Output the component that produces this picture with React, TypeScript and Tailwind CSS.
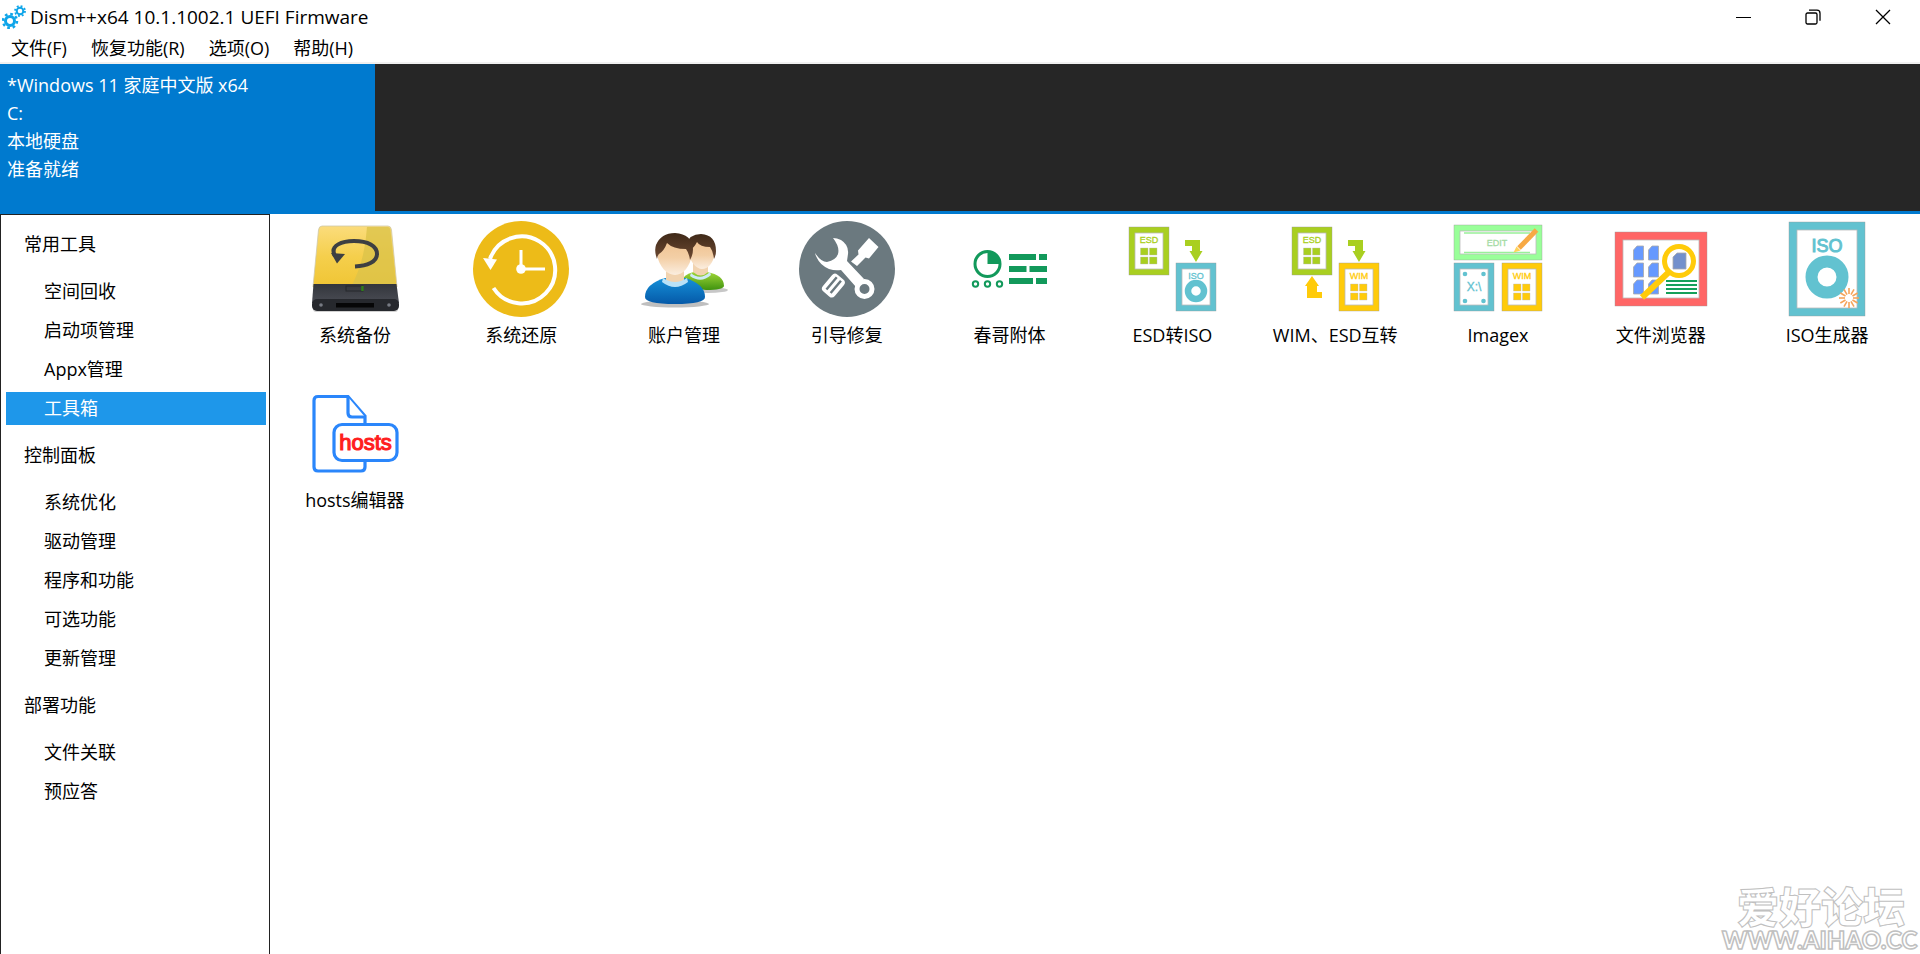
import type { ReactNode } from 'react'
import { clsx } from 'clsx'

const GREEN = '#a9cf20'
const CYAN = '#62c2d0'
const YELLOW = '#ffcb0a'

const menus = ['文件(F)', '恢复功能(R)', '选项(O)', '帮助(H)']

const groups = [
    { title: '常用工具', items: ['空间回收', '启动项管理', 'Appx管理', '工具箱'] },
    { title: '控制面板', items: ['系统优化', '驱动管理', '程序和功能', '可选功能', '更新管理'] },
    { title: '部署功能', items: ['文件关联', '预应答'] },
]

function Icon({ children }: { children: ReactNode }) {
    return (
        <svg viewBox="0 0 96 96" className="size-24 font-['Liberation_Sans',sans-serif]" aria-hidden="true">
            {children}
        </svg>
    )
}

function Frame({ x, y, w = 40, h = 48, color, border = 6 }: { x: number; y: number; w?: number; h?: number; color: string; border?: number }) {
    const half = border / 2
    return (
        <>
            <rect x={x + half} y={y + half} width={w - border} height={h - border} fill="#fff" stroke={color} strokeWidth={border} />
            <rect x={x + border} y={y + border} width={w - border * 2} height={h - border * 2} fill="none" stroke="#bbb" strokeWidth="0.8" />
            <rect x={x} y={y} width={w} height={h} fill="none" stroke="#999" strokeWidth="0.4" />
        </>
    )
}

function Caption({ x, y, size = 9, weight = 0.3, color, children }: { x: number; y: number; size?: number; weight?: number; color: string; children: string }) {
    return (
        <text x={x} y={y} fontSize={size} textAnchor="middle" fill={color} stroke={color} strokeWidth={weight}>
            {children}
        </text>
    )
}

function Panes({ x, y, color }: { x: number; y: number; color: string }) {
    return <path d={`M${x} ${y}h7.5v7h-7.5zM${x + 9} ${y}h7.5v7h-7.5zM${x} ${y + 9}h7.5v7h-7.5zM${x + 9} ${y + 9}h7.5v7h-7.5z`} fill={color} stroke="#bbb" strokeWidth="0.4" />
}

function ImageFile({ x, y, color, label }: { x: number; y: number; color: string; label: string }) {
    return (
        <>
            <Frame x={x} y={y} color={color} />
            <Caption x={x + 20} y={y + 16} color={color}>{label}</Caption>
            <Panes x={x + 11.5} y={y + 21} color={color} />
        </>
    )
}

const ArrowDown = () => <path d="M61 19h15v11h2.5L72 41l-6.5-11H68v-5h-7z" fill={GREEN} />

function BackupIcon() {
    return (
        <Icon>
            <defs>
                <linearGradient id="plate" x1="0" y1="0" x2="0" y2="1">
                    <stop offset="0" stopColor="#fbdc7c" />
                    <stop offset="0.5" stopColor="#f5cf4c" />
                    <stop offset="1" stopColor="#f0c534" />
                </linearGradient>
                <linearGradient id="base" x1="0" y1="0" x2="0" y2="1">
                    <stop offset="0" stopColor="#33363c" />
                    <stop offset="1" stopColor="#4a4c54" />
                </linearGradient>
            </defs>
            <rect x="6" y="84" width="85" height="7" rx="3" fill="#000" opacity="0.18" />
            <path d="M15 5h66q3 0 3.5 4L90 66H6L11.5 9Q12 5 15 5z" fill="url(#plate)" stroke="#cfc9a8" strokeWidth="0.8" />
            <path d="M60 6h21q2 0 2.5 3L89 66H44q14-26 16-60z" fill="#dcc34a" opacity="0.8" />
            <path d="M6.5 63h83L92 82H5z" fill="url(#base)" />
            <rect x="5" y="78" width="87" height="12" rx="5" fill="#26282d" />
            <rect x="29" y="82" width="38" height="4.5" fill="#060607" />
            <circle cx="14" cy="84" r="1.8" fill="#777b84" />
            <circle cx="82" cy="84" r="1.8" fill="#777b84" />
            <rect x="39" y="65" width="17" height="5" fill="none" stroke="#26282d" />
            <path d="M55.5 65v5" stroke="#2f7d1b" strokeWidth="2.5" />
            <path d="M28 35C22 24 36 20 47 20c14 0 23 5 23 13s-10 12-22 12.5" fill="none" stroke="#3d3f42" strokeWidth="4" />
            <path d="M24 32l14 1-8 9.500z" fill="#3d3f42" />
        </Icon>
    )
}

function RestoreIcon() {
    return (
        <Icon>
            <circle cx="48" cy="48" r="48" fill="#edbb18" />
            <path d="M20.5 67A33.5 33.5 0 1 0 17 38" fill="none" stroke="#fff" strokeWidth="4" />
            <path d="M10 37l14 1.5L17.5 49z" fill="#fff" />
            <path d="M48 29v19h24" fill="none" stroke="#fff" strokeWidth="3" />
            <circle cx="48" cy="48" r="4.8" fill="#fff" />
        </Icon>
    )
}

function AccountIcon() {
    return (
        <Icon>
            <defs>
                <linearGradient id="face" x1="0" y1="0" x2="0" y2="1">
                    <stop offset="0" stopColor="#eec08d" />
                    <stop offset="0.55" stopColor="#f3cfa6" />
                    <stop offset="1" stopColor="#fbeee0" />
                </linearGradient>
                <linearGradient id="hair" x1="0" y1="0" x2="0" y2="1">
                    <stop offset="0" stopColor="#3f2918" />
                    <stop offset="1" stopColor="#6e4a33" />
                </linearGradient>
                <linearGradient id="blue" x1="0" y1="0" x2="0" y2="1">
                    <stop offset="0" stopColor="#1590d8" />
                    <stop offset="1" stopColor="#0559a8" />
                </linearGradient>
                <linearGradient id="lime" x1="0" y1="0" x2="0" y2="1">
                    <stop offset="0" stopColor="#a0d638" />
                    <stop offset="1" stopColor="#3f930f" />
                </linearGradient>
            </defs>
            <ellipse cx="72" cy="69" rx="20" ry="3" fill="#000" opacity="0.22" />
            <path d="M48 66V56q4-4 10-5h13q17 3 17 14-1 4-18 4z" fill="url(#lime)" />
            <path d="M57 42h15v9q-7 7-15 0z" fill="#f1d3b0" />
            <path d="M55 52q9 8 19-1l1 3q-10 9-21 1z" fill="#cdeaf6" />
            <path d="M52 26q2-8 14-8t13 10c0 12-6 20-13 20S52 38 52 26z" fill="url(#face)" />
            <path d="M50 24q3-11 15-11 15 1 15 17 0 4-2 8-1-8-4-12-10 0-13-5-3 6-8 9z" fill="url(#hair)" />
            <ellipse cx="39" cy="83" rx="34" ry="3.5" fill="#000" opacity="0.25" />
            <path d="M9 76q0-13 20-19h20q20 6 20 19 0 7-30 7T9 76z" fill="url(#blue)" />
            <path d="M30 48h18v12q-9 6-18 0z" fill="#f1d3b0" />
            <path d="M27 57q12 8 24 0l1 4q-13 10-26 0z" fill="#b9e2f7" />
            <path d="M21 32q0-16 18-16t17 16c-1 13-9 22-17 22S22 45 21 32z" fill="url(#face)" />
            <path d="M21 38q-3-8-1-14 5-12 19-12 17 1 18 16 0 6-3 11-1-7-4-11-13 0-19-6-3 8-8 11-2 2-2 5z" fill="url(#hair)" />
        </Icon>
    )
}

function RepairIcon() {
    return (
        <Icon>
            <circle cx="48" cy="48" r="48" fill="#6b797f" />
            <path d="M34 17q4 0 8 2 8 5 7 14l-1 7 17 18-8 8-15-17q-6 1-12-1-9-4-12-11-2-4-2-5 6 9 12 9 9-2 11-8 2-7-5-16z" fill="#fff" />
            <circle cx="65.5" cy="68" r="7.5" fill="#6b797f" stroke="#fff" strokeWidth="5" />
            <path d="M70 17l9.5 9L70 37.5l-3.5-1L58 45l-6-4.5 7.5-7L59 29.5z" fill="#fff" />
            <g transform="rotate(40 34.5 64)">
                <rect x="27" y="53.5" width="15.5" height="22" rx="4" fill="#fff" />
                <path d="M32 56v16M37.5 56v16" stroke="#6b797f" strokeWidth="2.4" />
            </g>
        </Icon>
    )
}

function StatsIcon() {
    return (
        <Icon>
            <g fill="none" stroke="#12995b">
                <circle cx="25.5" cy="43" r="12.5" strokeWidth="3" />
                <circle cx="13.5" cy="63" r="2.7" strokeWidth="2" />
                <circle cx="25.5" cy="63" r="2.7" strokeWidth="2" />
                <circle cx="37.5" cy="63" r="2.7" strokeWidth="2" />
            </g>
            <path d="M25.5 43V30.5A12.5 12.5 0 0 1 38 43z" fill="#12995b" />
            <path d="M47 33h27v6H47zM77 33h8v6h-8zM47 45h17.5v6H47zM67.5 45H85v6H67.5zM47 57h24v6H47zM74 57h11v6H74z" fill="#12995b" />
        </Icon>
    )
}

function EsdToIsoIcon() {
    return (
        <Icon>
            <ImageFile x={5} y={6} color={GREEN} label="ESD" />
            <ArrowDown />
            <Frame x={52} y={42} color={CYAN} />
            <Caption x={72} y={58} color={CYAN}>ISO</Caption>
            <circle cx="72" cy="70" r="8" fill="none" stroke={CYAN} strokeWidth="6.5" />
        </Icon>
    )
}

function WimEsdIcon() {
    return (
        <Icon>
            <ImageFile x={5} y={6} color={GREEN} label="ESD" />
            <ArrowDown />
            <ImageFile x={52} y={42} color={YELLOW} label="WIM" />
            <path d="M25 55l7 10h-2v6h5v6H20V65h-2z" fill={YELLOW} />
        </Icon>
    )
}

function ImagexIcon() {
    return (
        <Icon>
            <Frame x={4} y={4} w={88} h={35} color="#99ff99" />
            <path d="M14 12h66M14 31.5h66" stroke="#99f099" strokeWidth="1.5" />
            <Caption x={47} y={25} color="#a5dba5">EDIT</Caption>
            <path d="M86.5 9L69 27" stroke="#f7a944" strokeWidth="5" />
            <path d="M66.5 25.5l4 4-7 2z" fill="#ffd35c" />
            <Frame x={4} y={42} color={CYAN} />
            <g fill={CYAN}>
                <circle cx="15" cy="53" r="2.3" />
                <circle cx="33.5" cy="53" r="2.3" />
                <circle cx="15" cy="80" r="2.3" />
                <circle cx="33.5" cy="80" r="2.3" />
            </g>
            <Caption x={24} y={70} size={12} color={CYAN}>X:\</Caption>
            <ImageFile x={52} y={42} color={YELLOW} label="WIM" />
        </Icon>
    )
}

function BrowserIcon() {
    return (
        <Icon>
            <Frame x={2} y={11} w={92} h={74} border={8} color="#ff6666" />
            {[25, 42, 59].map((y) => (
                <g key={y} fill="#6699ff" stroke="#aaa" strokeWidth="0.8">
                    <path d={`M24 ${y}h6.5v14h-10v-10z`} />
                    <path d={`M39 ${y}h6.5v14h-10v-10z`} />
                </g>
            ))}
            <path d="M53 60h31M53 64h31M53 68h31M53 72h31" stroke="#16a05a" strokeWidth="2.2" />
            <circle cx="66" cy="40" r="14.5" fill="#fff" stroke={YELLOW} strokeWidth="5" />
            <path d="M56 51L29 76.5" stroke={YELLOW} strokeWidth="6" />
            <path d="M64 32h9v16H60V36z" fill="#7390cc" stroke="#aaa" strokeWidth="0.8" />
        </Icon>
    )
}

function IsoIcon() {
    return (
        <Icon>
            <Frame x={10} y={1} w={76} h={94} border={8} color={CYAN} />
            <Caption x={48} y={31} size={18} weight={1} color={CYAN}>ISO</Caption>
            <circle cx="48" cy="56" r="15.5" fill="none" stroke={CYAN} strokeWidth="12" />
            {[0, 30, 60, 90, 120, 150, 180, 210, 240, 270, 300, 330].map((angle) => (
                <path key={angle} d="M70 73v-6" transform={`rotate(${angle} 70 77)`} stroke="#f5a45a" strokeWidth="1.6" />
            ))}
        </Icon>
    )
}

function HostsIcon() {
    return (
        <Icon>
            <g fill="#fff" stroke="#2a86fb" strokeWidth="3.2">
                <path d="M41 10.5H11q-4 0-4 4V81q0 4 4 4h43q4 0 4-4V30z" />
                <path d="M41 11v16q0 4 4 4h13" />
                <rect x="27" y="38.5" width="63" height="36" rx="8" />
            </g>
            <Caption x={58.5} y={64} size={22} weight={1.2} color="#ff1f1f">hosts</Caption>
        </Icon>
    )
}

const tools = [
    { name: '系统备份', icon: <BackupIcon /> },
    { name: '系统还原', icon: <RestoreIcon /> },
    { name: '账户管理', icon: <AccountIcon /> },
    { name: '引导修复', icon: <RepairIcon /> },
    { name: '春哥附体', icon: <StatsIcon /> },
    { name: 'ESD转ISO', icon: <EsdToIsoIcon /> },
    { name: 'WIM、ESD互转', icon: <WimEsdIcon /> },
    { name: 'Imagex', icon: <ImagexIcon /> },
    { name: '文件浏览器', icon: <BrowserIcon /> },
    { name: 'ISO生成器', icon: <IsoIcon /> },
    { name: 'hosts编辑器', icon: <HostsIcon /> },
]

function TitleBar() {
    return (
        <header className="flex h-[34px] items-center justify-between">
            <div className="flex items-center gap-1 pl-0.5">
                <svg viewBox="0 0 24 24" className="size-6" fill="none" stroke="#0fa5e9" aria-hidden="true">
                    <circle cx="8" cy="16" r="4.5" strokeWidth="3" />
                    <circle cx="8" cy="16" r="7" strokeWidth="2.5" strokeDasharray="2.7 2.8" />
                    <circle cx="18" cy="6" r="3.3" strokeWidth="2" />
                    <circle cx="18" cy="6" r="5" strokeWidth="1.8" strokeDasharray="1.9 2.03" />
                </svg>
                <h1 className="text-[19px]">Dism++x64 10.1.1002.1 UEFI Firmware</h1>
            </div>
            <div className="flex pr-0.5">
                <button aria-label="最小化" className="flex h-8 w-[70px] items-center justify-center">
                    <svg viewBox="0 0 16 16" className="size-4" stroke="#000"><path d="M1 8.5h15" /></svg>
                </button>
                <button aria-label="还原" className="flex h-8 w-[70px] items-center justify-center">
                    <svg viewBox="0 0 16 16" className="size-4" fill="none" stroke="#000" strokeWidth="1.3">
                        <rect x="1" y="4" width="11" height="11" rx="1.5" />
                        <path d="M4 1.2h8q3 0 3 3v7.5" />
                    </svg>
                </button>
                <button aria-label="关闭" className="flex h-8 w-[70px] items-center justify-center">
                    <svg viewBox="0 0 16 16" className="size-4" stroke="#000" strokeWidth="1.3"><path d="M1 1l14 14M15 1L1 15" /></svg>
                </button>
            </div>
        </header>
    )
}

function Sidebar() {
    return (
        <nav className="w-[270px] shrink-0 border border-b-0 border-[#222] pt-0.5">
            {groups.map((group) => (
                <section key={group.title}>
                    <h2 className="pl-[23px] leading-[55px]">{group.title}</h2>
                    <ul>
                        {group.items.map((item) => (
                            <li key={item} className="py-[3px] pr-[3px] pl-[5px]">
                                <button className={clsx('block w-full pl-[38px] text-left leading-[33px]', item === '工具箱' && 'bg-[#1e97ea] text-white')}>
                                    {item}
                                </button>
                            </li>
                        ))}
                    </ul>
                </section>
            ))}
        </nav>
    )
}

function Watermark() {
    return (
        <svg viewBox="0 0 200 96" className="pointer-events-none absolute right-0 bottom-0 h-24 w-[200px]" fill="#fff" stroke="#c0c0c0" aria-hidden="true">
            <text x="17" y="65" fontSize="42" fontWeight="900" className="font-['Noto_Sans_CJK_SC',sans-serif]">爱好论坛</text>
            <text x="2" y="91" fontSize="24" fontWeight="900" strokeWidth="1.5" className="font-['Lato',sans-serif]">WWW.AIHAO.CC</text>
        </svg>
    )
}

export default function App() {
    return (
        <div className="relative flex min-h-screen flex-col overflow-hidden bg-white font-['Open_Sans','Noto_Sans_CJK_SC',sans-serif] text-[18px] text-black">
            <TitleBar />
            <div className="flex h-[30px] items-center gap-6 border-b-2 border-[#f0f0f0] pl-[11px]">
                {menus.map((menu) => (
                    <button key={menu}>{menu}</button>
                ))}
            </div>
            <div className="flex h-[150px] border-b-3 border-[#007acf] bg-[#262626]">
                <button className="-mb-[3px] w-[375px] bg-[#007acf] px-[7px] pt-[3px] text-left leading-7 text-white">
                    <span className="block">*Windows 11 家庭中文版 x64</span>
                    <span className="block">C:</span>
                    <span className="block">本地硬盘</span>
                    <span className="block pb-7">准备就绪</span>
                </button>
            </div>
            <div className="flex flex-1">
                <Sidebar />
                <main className="grid flex-1 auto-rows-[165px] grid-cols-[170fr_repeat(8,163fr)_170fr] content-start pt-[7px] pr-2">
                    {tools.map((tool) => (
                        <button key={tool.name} className="flex flex-col items-center gap-1.5">
                            {tool.icon}
                            <span className="leading-6 whitespace-nowrap">{tool.name}</span>
                        </button>
                    ))}
                </main>
            </div>
            <Watermark />
        </div>
    )
}
